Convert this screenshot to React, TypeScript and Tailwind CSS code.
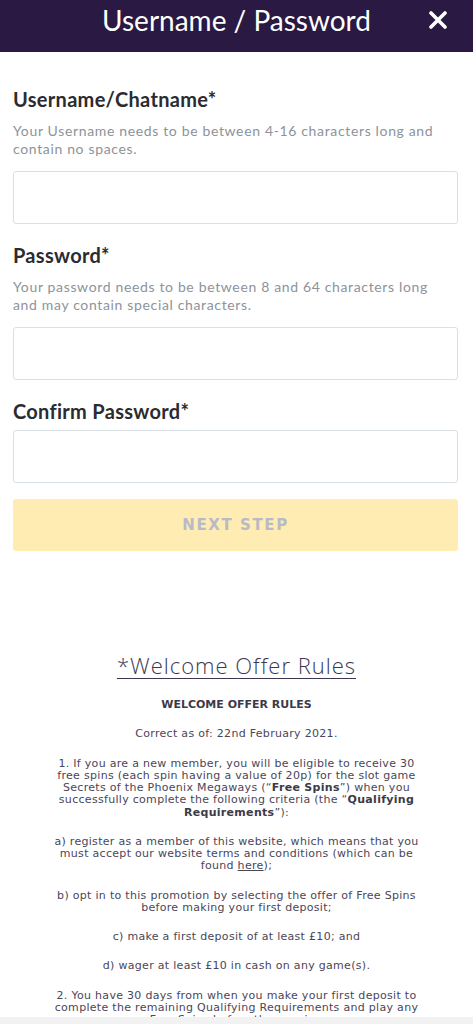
import React from "react";

const lato = { fontFamily: "Lato, 'Open Sans', sans-serif" };

function Field({ label, help, first }: { label: string; help?: React.ReactNode; first?: boolean }) {
  return (
    <div className={first ? "" : "mt-[19px]"}>
      <div className="text-[20px] leading-[24px] font-bold tracking-[0.3px] text-[#2b2b30]">{label}</div>
      {help ? (
        <div className="mt-[11px] text-[14px] leading-[18px] tracking-[0.65px] text-[#8d939a]">{help}</div>
      ) : null}
      <div className={(help ? "mt-[13px]" : "mt-[7px]") + " h-[53px] w-full rounded-[3px] border border-[#d9e0e5] bg-white"} />
    </div>
  );
}

export default function App() {
  return (
    <div className="relative min-h-screen bg-white" style={lato}>
      <div className="h-[52px] bg-[#2a1942] grid grid-cols-[1fr_auto_1fr]">
        <div />
        <div className="h-[39px] flex items-center text-[28px] text-white leading-none">Username / Password</div>
        <div className="h-[39px] flex items-center justify-end pr-[25px]">
          <svg width="20" height="18" viewBox="0 0 20 18">
            <path d="M3 2 L17 16 M17 2 L3 16" stroke="white" strokeWidth="3.6" strokeLinecap="round" />
          </svg>
        </div>
      </div>

      <div className="pl-[13px] pr-[15px] pt-[35px]">
        <Field
          first
          label="Username/Chatname*"
          help={<>Your Username needs to be between 4-16 characters long and<br />contain no spaces.</>}
        />
        <Field
          label="Password*"
          help={<>Your password needs to be between 8 and 64 characters long<br />and may contain special characters.</>}
        />
        <Field label="Confirm Password*" />
        <button className="mt-[16px] h-[52px] w-full rounded-[3px] bg-[#ffecb3] flex items-center justify-center">
          <span
            className="text-[15px] font-bold tracking-[1.6px] text-[#b8bac8]"
            style={{ fontFamily: "'DejaVu Sans', sans-serif" }}
          >
            NEXT STEP
          </span>
        </button>
      </div>

      <div className="pt-[99px] text-center text-[#4a4658]" style={{ fontFamily: "'DejaVu Sans', sans-serif" }}>
        <div
          className="text-[22px] leading-[30px] underline underline-offset-[4px] decoration-1 tracking-[1px] text-[#3b3752] font-light"
          style={{ fontFamily: "'Open Sans', sans-serif" }}
        >
          *Welcome Offer Rules
        </div>
        <div className="mt-[19px] text-[11px] leading-[12.25px] tracking-[0.3px] flex flex-col gap-[17px]">
          <p className="font-bold text-[11px] tracking-normal text-[#3d3a48]">WELCOME OFFER RULES</p>
          <p>Correct as of: 22nd February 2021.</p>
          <p>
            1. If you are a new member, you will be eligible to receive 30<br />
            free spins (each spin having a value of 20p) for the slot game<br />
            Secrets of the Phoenix Megaways (“<b className="text-[#3d3a48]">Free Spins</b>”) when you<br />
            successfully complete the following criteria (the “<b className="text-[#3d3a48]">Qualifying</b><br />
            <b className="text-[#3d3a48]">Requirements</b>”):
          </p>
          <p>
            a) register as a member of this website, which means that you<br />
            must accept our website terms and conditions (which can be<br />
            found <span className="underline">here</span>);
          </p>
          <p>
            b) opt in to this promotion by selecting the offer of Free Spins<br />
            before making your first deposit;
          </p>
          <p>c) make a first deposit of at least £10; and</p>
          <p>d) wager at least £10 in cash on any game(s).</p>
          <p>
            2. You have 30 days from when you make your first deposit to<br />
            complete the remaining Qualifying Requirements and play any<br />
            Free Spins before they expire.
          </p>
        </div>
        <div className="h-[60px]" />
      </div>

      <div className="fixed bottom-0 left-0 right-0 h-[7px] bg-[#f2f2f2]" />
    </div>
  );
}
